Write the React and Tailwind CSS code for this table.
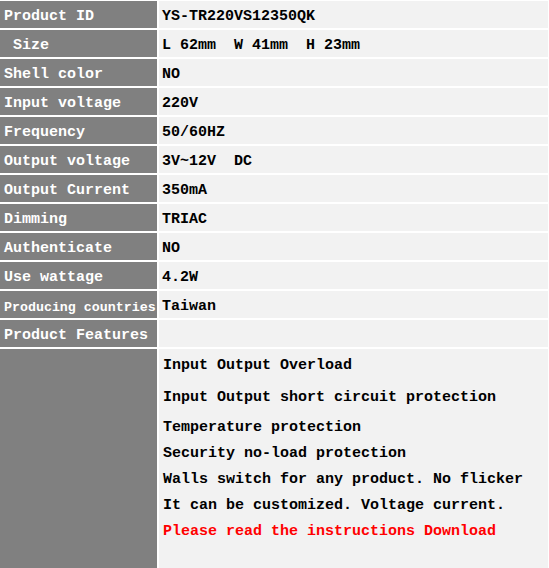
export default function App() {
  const rows = [
    ["Product ID", "YS-TR220VS12350QK"],
    [" Size", "L 62mm  W 41mm  H 23mm"],
    ["Shell color", "NO"],
    ["Input voltage", "220V"],
    ["Frequency", "50/60HZ"],
    ["Output voltage", "3V~12V  DC"],
    ["Output Current", "350mA"],
    ["Dimming", "TRIAC"],
    ["Authenticate", "NO"],
    ["Use wattage", "4.2W"],
    ["Producing countries", "Taiwan", true],
    ["Product Features", ""],
  ];
  return (
    <div
      className="w-[549px] h-[568px] bg-white overflow-hidden pt-[1px]"
      style={{ fontFamily: '"Liberation Mono", monospace' }}
    >
      <div className="grid grid-cols-[157px_389px] gap-x-[2px] gap-y-[2px] font-bold">
        {rows.map(([k, v, small]) => (
          <>
            <div
              key={k + "k"}
              className={`h-[27px] bg-[#808080] text-white flex items-center pt-[6px] pl-[4px] whitespace-pre ${small ? "text-[13.3px] pl-[3px]" : "text-[15px]"}`}
            >
              {k}
            </div>
            <div
              key={k + "v"}
              className="h-[27px] bg-[#f2f2f2] text-black flex items-center pt-[6px] pl-[3px] text-[15px] whitespace-pre"
            >
              {v}
            </div>
          </>
        ))}
        <div className="h-[240px] bg-[#808080]"></div>
        <div className="h-[240px] bg-[#f2f2f2] pl-[4px] pt-[4px] text-[15px] text-black whitespace-pre">
          <div className="leading-[26px]">Input Output Overload</div>
          <div className="leading-[26px] mt-[6px]">Input Output short circuit protection</div>
          <div className="leading-[26px] mt-[4px]">Temperature protection</div>
          <div className="leading-[26px]">Security no-load protection</div>
          <div className="leading-[26px]">Walls switch for any product. No flicker</div>
          <div className="leading-[26px]">It can be customized. Voltage current.</div>
          <div className="leading-[26px] text-[#ff0000]">Please read the instructions Download</div>
        </div>
      </div>
    </div>
  );
}
